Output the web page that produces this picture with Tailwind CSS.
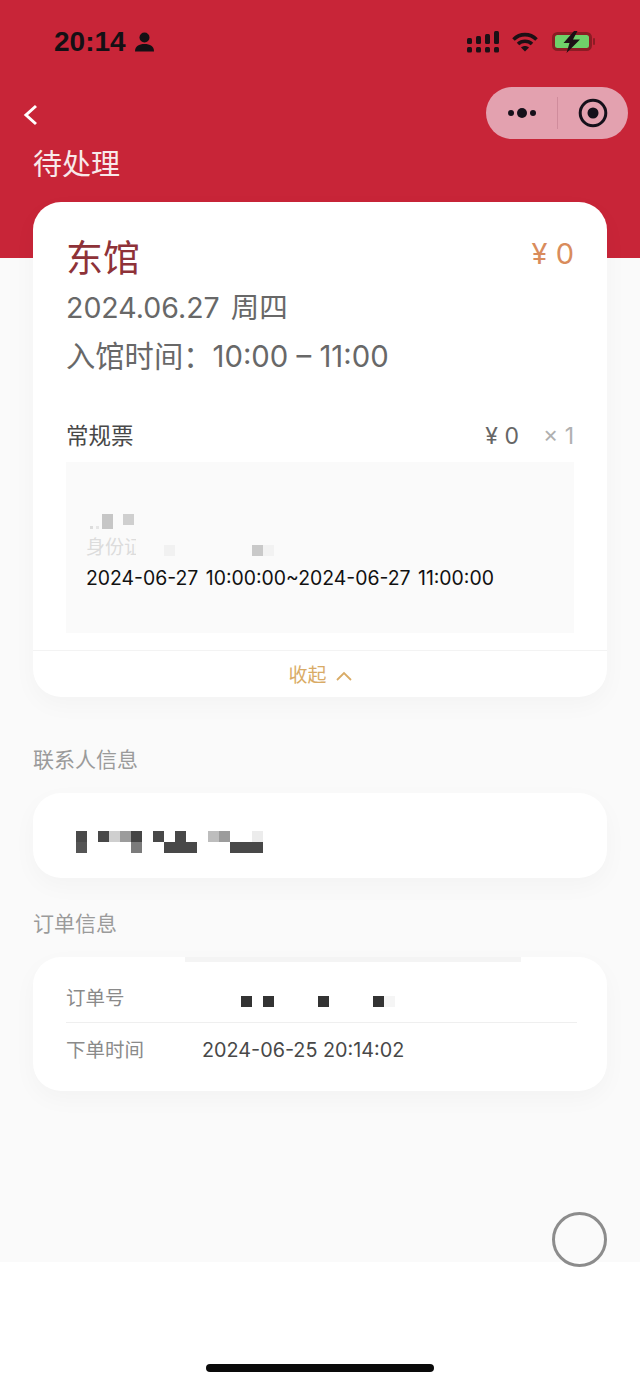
<!DOCTYPE html>
<html lang="zh">
<head>
<meta charset="utf-8">
<script src="https://cdn.jsdelivr.net/npm/@tailwindcss/browser@4"></script>
</head>
<body class="m-0 bg-white">
<div class="relative w-[640px] h-[1385px] overflow-hidden bg-white font-['Inter','Noto_Sans_CJK_SC',sans-serif]">
  <!-- Red header -->
  <header class="h-[258px] bg-[#c82538] pt-[27px]">
    <div class="flex items-center justify-between h-[30px] pl-[54px] pr-[45px]">
      <div class="flex items-center gap-[9px]">
        <span class="text-[28px] font-['Liberation_Sans'] font-bold leading-[30px] text-[#141014]">20:14</span>
        <svg width="19" height="20" viewBox="0 0 19 20" fill="#141014"><circle cx="9.5" cy="5.5" r="5"/><path d="M0 19.5C0 14 4 12 9.5 12S19 14 19 19.5z"/></svg>
      </div>
      <div class="flex items-center">
        <svg width="32" height="22" viewBox="0 0 32 22" fill="#1c1015"><rect x="0" y="7" width="5" height="6" rx="1.5"/><rect x="9" y="5" width="5" height="8" rx="1.5"/><rect x="18" y="3" width="5" height="10" rx="1.5"/><rect x="27" y="0" width="5" height="13" rx="1.5"/><rect x="0" y="16" width="5" height="5.500" rx="1.500"/><rect x="9" y="16" width="5" height="5.500" rx="1.500"/><rect x="18" y="16" width="5" height="5.500" rx="1.500"/><rect x="27" y="16" width="5" height="5.500" rx="1.500"/></svg>
        <svg class="ml-[13px]" width="26" height="20" viewBox="0 0 26 20" fill="none" stroke="#1c1015" stroke-width="3.600"><path d="M1.500 7.500C8 1 18 1 24.500 7.500"/><path d="M6 12C10 8.300 16 8.300 20 12"/><path d="M13 19.500L9 15.500C11.300 13.500 14.700 13.500 17 15.500z" fill="#1c1015" stroke="none"/></svg>
        <svg class="ml-[14px]" width="43" height="22" viewBox="0 0 43 22"><rect x="1.500" y="2.500" width="37" height="16" rx="4" fill="#6fd069" stroke="#8b1c24" stroke-width="3"/><path d="M22 0L11.500 12H17.500L14.500 22L28 8.500H21L25.500 0z" fill="#1c1015"/><rect x="41" y="7" width="2" height="7" rx="1" fill="#8b1c24"/></svg>
      </div>
    </div>
    <div class="flex items-start justify-between pl-[23px] pr-[12px] mt-[30px] h-[52px]">
      <svg class="mt-[17px]" width="16" height="22" viewBox="0 0 16 22" fill="none" stroke="#fff" stroke-width="3"><path d="M13 2L3 11l10 9"/></svg>
      <div class="flex items-center w-[142px] h-[52px] rounded-full bg-[#e3a1af]">
        <div class="flex items-center justify-center w-[71px] h-[52px] gap-[3px]">
          <span class="w-[6px] h-[6px] rounded-full bg-[#15101a]"></span>
          <span class="w-[10px] h-[10px] rounded-full bg-[#15101a]"></span>
          <span class="w-[6px] h-[6px] rounded-full bg-[#15101a]"></span>
        </div>
        <div class="w-px h-[32px] bg-[#d08c9c]"></div>
        <div class="flex items-center justify-center flex-1 h-[52px]">
          <svg width="30" height="30" viewBox="0 0 30 30"><circle cx="15" cy="15" r="12.800" fill="none" stroke="#15101a" stroke-width="3"/><circle cx="15" cy="15" r="5.500" fill="#15101a"/></svg>
        </div>
      </div>
    </div>
    <h1 class="mt-[6px] ml-[33px] text-[29px] leading-[40px] font-normal text-[#f8e9ea]">待处理</h1>
  </header>

  <!-- Body -->
  <main class="relative flow-root h-[1004px] bg-[#fafafa] px-[33px]">
    <section class="relative -mt-[56px] h-[495px] rounded-[28px] bg-white shadow-[0_8px_24px_rgba(0,0,0,0.03)] pt-[28px]">
      <div class="flex items-center justify-between h-[56px] pl-[33px] pr-[33px]">
        <span class="text-[37px] leading-[56px] text-[#8e3238] mt-[1px]">东馆</span>
        <span class="text-[29px] leading-[40px] text-[#d98c5c] -mt-[9px]">¥ 0</span>
      </div>
      <div class="h-[44px] pl-[33px] text-[28.500px] leading-[44px] text-[#686868] [word-spacing:3px]">2024.06.27 周四</div>
      <div class="h-[54px] pl-[33px] text-[29.300px] leading-[54px] text-[#686868]">入馆时间：10:00 – 11:00</div>
      <div class="flex items-center justify-between h-[50px] mt-[27px] pl-[33px] pr-[33px]">
        <span class="text-[22.500px] text-[#484848]">常规票</span>
        <div class="flex items-center text-[23px]">
          <span class="text-[#666]">¥ 0</span>
          <span class="ml-[24px] text-[#b0b0b0]">× 1</span>
        </div>
      </div>
      <div class="h-[171px] mt-px mx-[33px] bg-[#fafafa] pl-[20px] pt-[52px]">
        <div class="flex items-start h-[15px] pl-[4px]">
          <span class="w-[3px] h-[3px] mt-[12px] bg-[#dddddd]"></span>
          <span class="w-[3px] h-[3px] mt-[12px] ml-[3px] bg-[#e6e6e6]"></span>
          <span class="w-[11px] h-[15px] bg-[#c6c6c6] ml-[3px]"></span>
          <span class="w-[11px] h-[11px] ml-[10px] bg-[#cfcfcf]"></span>
        </div>
        <div class="flex items-center h-[24px] mt-[7px]">
          <span class="relative w-[50px] whitespace-nowrap text-[19px] leading-[24px] text-[#dcdcdc]">身份证<span class="absolute left-[50px] top-0 w-[12px] h-[24px] bg-[#fafafa]"></span></span>
          <span class="w-[11px] h-[11px] ml-[28px] mt-[4px] bg-[#f1f1f1]"></span>
          <span class="w-[11px] h-[11px] ml-[77px] mt-[4px] bg-[#c9c9c9]"></span>
          <span class="w-[11px] h-[11px] mt-[4px] bg-[#f2f2f2]"></span>
        </div>
        <div class="mt-[5px] text-[19.400px] leading-[26px] text-[#111] whitespace-nowrap [word-spacing:2px]">2024-06-27 10:00:00~2024-06-27 11:00:00</div>
      </div>
      <div class="h-[47px] mt-[17px] border-t border-[#f3f3f3] flex items-center justify-center gap-[9px] pt-[4px]">
        <span class="text-[19px] text-[#d9ab66]">收起</span>
        <svg width="16" height="10" viewBox="0 0 16 10" fill="none" stroke="#d9ab66" stroke-width="1.800"><path d="M1 9l7-7 7 7"/></svg>
      </div>
    </section>

    <h2 class="mt-[48px] h-[30px] text-[21px] leading-[30px] font-normal text-[#9b9b9b]">联系人信息</h2>
    <section class="mt-[18px] h-[85px] rounded-[28px] bg-white shadow-[0_8px_24px_rgba(0,0,0,0.03)] pt-[38px] pl-[43px]">
      <div class="grid grid-cols-[repeat(17,11px)] grid-rows-[11px_11px]">
        <span class="bg-[#4a4a4a]"></span><span></span><span class="bg-[#484848]"></span><span class="bg-[#cfcfcf]"></span><span class="bg-[#9c9c9c]"></span><span class="bg-[#454545]"></span><span></span><span class="bg-[#484848]"></span><span></span><span class="bg-[#484848]"></span><span></span><span></span><span class="bg-[#bdbdbd]"></span><span class="bg-[#9c9c9c]"></span><span></span><span></span><span class="bg-[#ececec]"></span>
        <span class="bg-[#555]"></span><span></span><span></span><span></span><span></span><span class="bg-[#7b7b7b]"></span><span></span><span></span><span class="bg-[#484848]"></span><span class="bg-[#484848]"></span><span class="bg-[#484848]"></span><span></span><span></span><span></span><span class="bg-[#484848]"></span><span class="bg-[#484848]"></span><span class="bg-[#484848]"></span>
      </div>
    </section>

    <h2 class="mt-[31px] h-[30px] text-[21px] leading-[30px] font-normal text-[#9b9b9b]">订单信息</h2>
    <section class="relative mt-[18px] h-[134px] rounded-[28px] bg-white shadow-[0_8px_24px_rgba(0,0,0,0.03)] pl-[33px] pr-[30px]">
      <div class="absolute left-[152px] top-0 w-[336px] h-[5px] bg-[#efefef]/70"></div>
      <div class="flex items-center h-[66px] border-b border-[#efefef] pt-[28px] pb-[10px]">
        <span class="w-[175px] text-[19.500px] text-[#8a8a8a]">订单号</span>
        <div class="grid grid-cols-[repeat(14,11px)] h-[11px] mt-[6px]">
          <span class="bg-[#333]"></span><span></span><span class="bg-[#333]"></span><span></span><span></span><span></span><span></span><span class="bg-[#333]"></span><span></span><span></span><span></span><span></span><span class="bg-[#333]"></span><span class="bg-[#f5f5f5]"></span>
        </div>
      </div>
      <div class="flex items-center h-[56px]">
        <span class="w-[136px] text-[19.500px] text-[#8a8a8a]">下单时间</span>
        <span class="text-[19.800px] text-[#484848]">2024-06-25 20:14:02</span>
      </div>
    </section>
  </main>

  <!-- Floating button -->
  <div class="absolute left-[552px] top-[1212px] w-[55px] h-[55px] rounded-full border-[3px] border-[#8c8c8c]"></div>

  <!-- Home indicator -->
  <div class="flex justify-center pt-[102px]">
    <div class="w-[228px] h-[8px] rounded-full bg-[#0a0a0a]"></div>
  </div>
</div>
</body>
</html>
